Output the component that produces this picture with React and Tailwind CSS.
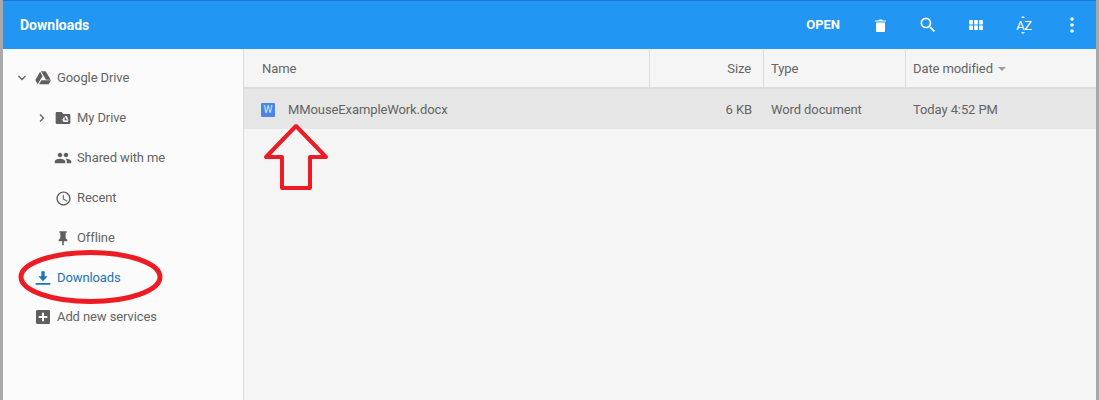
import React from "react";

const DriveIcon = () => (
  <svg viewBox="0 0 24 24" className="w-[16px] h-[16px] fill-[#5f5f5f]">
    <path d="M7.7 2.5 0.5 15l3.6 6.5L11.3 9zM9.6 15.5l-3.6 6h14.6l3.4-6zM23.5 14.5 16 2H9l7.5 12.5z" />
  </svg>
);

const MyDriveIcon = () => (
  <svg viewBox="0 0 24 24" className="w-[16px] h-[16px] fill-[#5f5f5f]">
    <path fillRule="evenodd" d="M2 3h8l2.5 3H21a2 2 0 0 1 2 2v11a2 2 0 0 1-2 2H3a2 2 0 0 1-2-2V5a2 2 0 0 1 1-2zM14.5 9h3l3 5.5h-3zM13.5 10l1.5 3-2.5 4.5-1.5-2.8zM13.8 15.5h6.7L19 18h-6.7z" />
  </svg>
);

const PeopleIcon = () => (
  <svg viewBox="0 0 24 24" className="w-[18px] h-[18px] fill-[#5f5f5f]">
    <path d="M16 11c1.66 0 2.99-1.34 2.99-3S17.66 5 16 5s-3 1.34-3 3 1.34 3 3 3zm-8 0c1.66 0 2.99-1.34 2.99-3S9.66 5 8 5 5 6.34 5 8s1.34 3 3 3zm0 2c-2.33 0-7 1.17-7 3.5V19h14v-2.5c0-2.33-4.67-3.5-7-3.5zm8 0c-.29 0-.62.02-.97.05 1.16.84 1.97 1.97 1.97 3.45V19h6v-2.5c0-2.33-4.67-3.5-7-3.5z" />
  </svg>
);

const ClockIcon = () => (
  <svg viewBox="0 0 24 24" className="w-[17px] h-[17px] fill-[#5f5f5f]">
    <path d="M11.99 2C6.47 2 2 6.48 2 12s4.47 10 9.99 10C17.52 22 22 17.52 22 12S17.52 2 11.99 2zM12 20c-4.42 0-8-3.58-8-8s3.58-8 8-8 8 3.58 8 8-3.58 8-8 8zm.5-13H11v6l5.25 3.15.75-1.23-4.5-2.67z" />
  </svg>
);

const PinIcon = () => (
  <svg viewBox="0 0 24 24" className="w-[16px] h-[16px] fill-[#5f5f5f]">
    <path d="M16 12V4h1.5V2h-11v2H8v8l-2.5 3v2h5.3v6h2.4v-6h5.3v-2z" />
  </svg>
);

const DownloadIcon = () => (
  <svg viewBox="0 0 24 24" className="w-[16px] h-[16px] fill-[#1c74b8]">
    <path d="M19 9.5h-4.5V2h-5v7.5H5l7 7.5zM1 19.5h22V22H1z" />
  </svg>
);

const PlusBoxIcon = () => (
  <svg viewBox="0 0 24 24" className="w-[16px] h-[16px] fill-[#5f5f5f]">
    <path d="M20.5 1.5h-17a2 2 0 0 0-2 2v17a2 2 0 0 0 2 2h17a2 2 0 0 0 2-2v-17a2 2 0 0 0-2-2zM18.5 13.5h-5v5h-3v-5h-5v-3h5v-5h3v5h5z" />
  </svg>
);

const ChevronDown = () => (
  <svg viewBox="0 0 8 6" className="w-[8px] h-[6px] fill-none stroke-[#5f5f5f] stroke-[1.3]">
    <path d="M0.5 1 4 4.5 7.5 1" />
  </svg>
);

const ChevronRight = () => (
  <svg viewBox="0 0 6 8" className="w-[6px] h-[8px] fill-none stroke-[#5f5f5f] stroke-[1.3]">
    <path d="M1 0.5 4.5 4 1 7.5" />
  </svg>
);

function NavRow({ icon, text, caret, indent, active, className = "" }) {
  return (
    <div className={`h-10 flex items-center ${indent ? "pl-[31px]" : "pl-[11px]"} ${className}`}>
      <div className="w-[16px] flex justify-center">{caret}</div>
      <div className="w-[18px] ml-[4px] flex justify-center">{icon}</div>
      <span className={`ml-[5px] ${active ? "text-[#1c74b8]" : "text-[#646464]"}`}>{text}</span>
    </div>
  );
}

function ToolButton({ children }) {
  return <div className="w-12 flex items-center justify-center">{children}</div>;
}

export default function App() {
  return (
    <div className="relative w-[1099px] h-[400px] overflow-hidden flex flex-col bg-[#f5f5f5] border-l-[3px] border-r-[3px] border-[#a9a9a9] font-['Roboto',sans-serif] text-[13px] tracking-[-0.1px] text-[#646464]">
      {/* Top bar */}
      <div className="h-[49px] shrink-0 flex items-center bg-[#2196f3] border-t border-[#1a78d2] text-white">
        <h1 className="ml-[17px] text-[14px] font-bold leading-none tracking-normal">Downloads</h1>
        <div className="ml-auto flex items-center">
          <span className="text-[13px] font-bold tracking-normal mr-4">OPEN</span>
          <ToolButton>
            <svg viewBox="0 0 11 13" className="w-[11px] h-[13px] fill-white">
              <path d="M1 3.5h9V12a1 1 0 0 1-1 1H2a1 1 0 0 1-1-1zM0 1.5h3.5l.5-1h3l.5 1H11v1H0z" />
            </svg>
          </ToolButton>
          <ToolButton>
            <svg viewBox="0 0 24 24" className="w-[20px] h-[20px] fill-white">
              <path d="M15.5 14h-.79l-.28-.27A6.47 6.47 0 0 0 16 9.5 6.5 6.5 0 1 0 9.5 16c1.61 0 3.09-.59 4.23-1.57l.27.28v.79l5 4.99L20.49 19zm-6 0C7.01 14 5 11.99 5 9.5S7.01 5 9.5 5 14 7.01 14 9.5 11.99 14 9.5 14z" />
            </svg>
          </ToolButton>
          <ToolButton>
            <svg viewBox="0 0 15 11" className="w-[14px] h-[10px] fill-white">
              <path d="M0 0h4v5H0zM5.5 0h4v5h-4zM11 0h4v5h-4zM0 6h4v5H0zM5.5 6h4v5h-4zM11 6h4v5h-4z" />
            </svg>
          </ToolButton>
          <ToolButton>
            <span className="relative text-[13px] leading-none tracking-[-0.5px]">
              AZ
              <svg viewBox="0 0 4 18" className="absolute left-[5px] top-[-3px] w-[4px] h-[18px] fill-white">
                <path d="M2 0 4 2H0zM2 18 4 16H0z" />
              </svg>
            </span>
          </ToolButton>
          <ToolButton>
            <svg viewBox="0 0 4 16" className="w-[4px] h-[16px] fill-white">
              <circle cx="2" cy="2" r="1.8" />
              <circle cx="2" cy="8" r="1.8" />
              <circle cx="2" cy="14" r="1.8" />
            </svg>
          </ToolButton>
        </div>
      </div>

      <div className="flex flex-1 min-h-0">
        {/* Sidebar */}
        <aside className="w-[241px] shrink-0 pt-[9px] bg-[#fbfbfb] border-r border-[#dcdcdc]">
          <NavRow icon={<DriveIcon />} text="Google Drive" caret={<ChevronDown />} />
          <NavRow icon={<MyDriveIcon />} text="My Drive" caret={<ChevronRight />} indent />
          <NavRow icon={<PeopleIcon />} text="Shared with me" indent />
          <NavRow icon={<ClockIcon />} text="Recent" indent />
          <NavRow icon={<PinIcon />} text="Offline" indent />
          <NavRow icon={<DownloadIcon />} text="Downloads" active />
          <NavRow icon={<PlusBoxIcon />} text="Add new services" className="-mt-px" />
        </aside>

        {/* File list */}
        <main className="flex-1 min-w-0">
          <div className="h-[40px] pt-px flex border-b-2 border-[#dcdcdc]">
            <div className="w-[406px] pl-[18px] flex items-center border-r border-[#dcdcdc]">Name</div>
            <div className="w-[114px] pr-[12px] flex items-center justify-end border-r border-[#dcdcdc]">Size</div>
            <div className="w-[142px] pl-[7px] flex items-center border-r border-[#dcdcdc]">Type</div>
            <div className="flex-1 pl-[7px] flex items-center">
              Date modified
              <span className="ml-[5px] w-0 h-0 border-x-[4px] border-x-transparent border-t-[4px] border-t-[#a0a0a0]" />
            </div>
          </div>
          <div className="h-[40px] pt-px flex items-center bg-[#e6e6e6]">
            <div className="w-[406px] pl-[17px] flex items-center">
              <span className="w-[14px] h-[14px] rounded-[1px] bg-[#4a86e8] text-[#dfe9fb] text-[10px] leading-[14px] text-center">W</span>
              <span className="ml-[13px]">MMouseExampleWork.docx</span>
            </div>
            <div className="w-[114px] pr-[12px] text-right">6 KB</div>
            <div className="w-[142px] pl-[7px]">Word document</div>
            <div className="flex-1 pl-[7px]">Today 4:52 PM</div>
          </div>
        </main>
      </div>

      {/* Red annotations drawn over the screenshot */}
      <svg viewBox="0 0 1099 400" className="absolute left-[-3px] top-0 w-[1099px] h-[400px] pointer-events-none fill-none stroke-[#ed1c24]">
        <ellipse cx="90.5" cy="277" rx="69.5" ry="24.5" strokeWidth="5" />
        <path d="M296 126 L266 157 H282 V188 H310 V157 H326 Z" strokeWidth="4" strokeLinejoin="round" />
      </svg>
    </div>
  );
}
